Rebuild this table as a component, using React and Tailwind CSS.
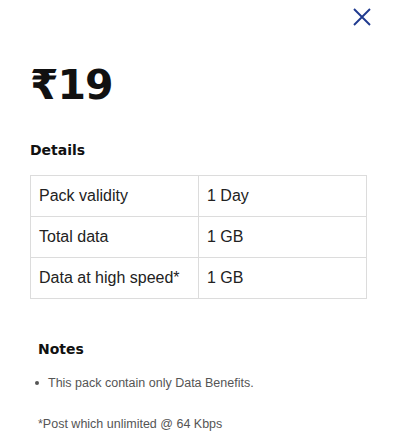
import React from 'react';

const rows = [
  ['Pack validity', '1 Day'],
  ['Total data', '1 GB'],
  ['Data at high speed*', '1 GB'],
];

export default function App() {
  return (
    <div className="w-[400px] h-[448px] bg-white overflow-hidden font-['Liberation_Sans',Arial,sans-serif]">
      <div className="flex justify-end pt-[7px] pr-[28px]">
        <button className="text-[#1f3a8f]">
          <svg width="20" height="20" viewBox="0 0 20 20" fill="none" stroke="currentColor" strokeWidth="1.9">
            <path d="M2 2L18 18M18 2L2 18" />
          </svg>
        </button>
      </div>

      <div className="px-[30px]">
        <h1 className="mt-[38px] text-[41px] leading-none font-bold text-[#111] font-['DejaVu_Sans',sans-serif] tracking-[-1px]">
          ₹19
        </h1>

        <h2 className="mt-[34px] text-[14px] font-bold text-[#111] font-['DejaVu_Sans',sans-serif]">Details</h2>

        <table className="mt-[14px] w-[337px] border-collapse text-[16px] text-[#222]">
          <tbody>
            {rows.map(([label, value]) => (
              <tr key={label} className="h-[41px]">
                <td className="w-[168px] border border-[#dcdcdc] pl-[8px]">{label}</td>
                <td className="border border-[#dcdcdc] pl-[8px]">{value}</td>
              </tr>
            ))}
          </tbody>
        </table>

        <div className="pl-[8px]">
          <h3 className="mt-[40px] text-[14px] font-bold text-[#111] font-['DejaVu_Sans',sans-serif]">Notes</h3>
          <ul className="mt-[14px] text-[12.5px] text-[#555]">
            <li className="flex items-center gap-[9px] -ml-[3px]">
              <span className="w-[4px] h-[4px] rounded-full bg-[#555]" />
              This pack contain only Data Benefits.
            </li>
          </ul>
          <p className="mt-[22px] text-[12.5px] text-[#555]">*Post which unlimited @ 64 Kbps</p>
        </div>
      </div>
    </div>
  );
}
